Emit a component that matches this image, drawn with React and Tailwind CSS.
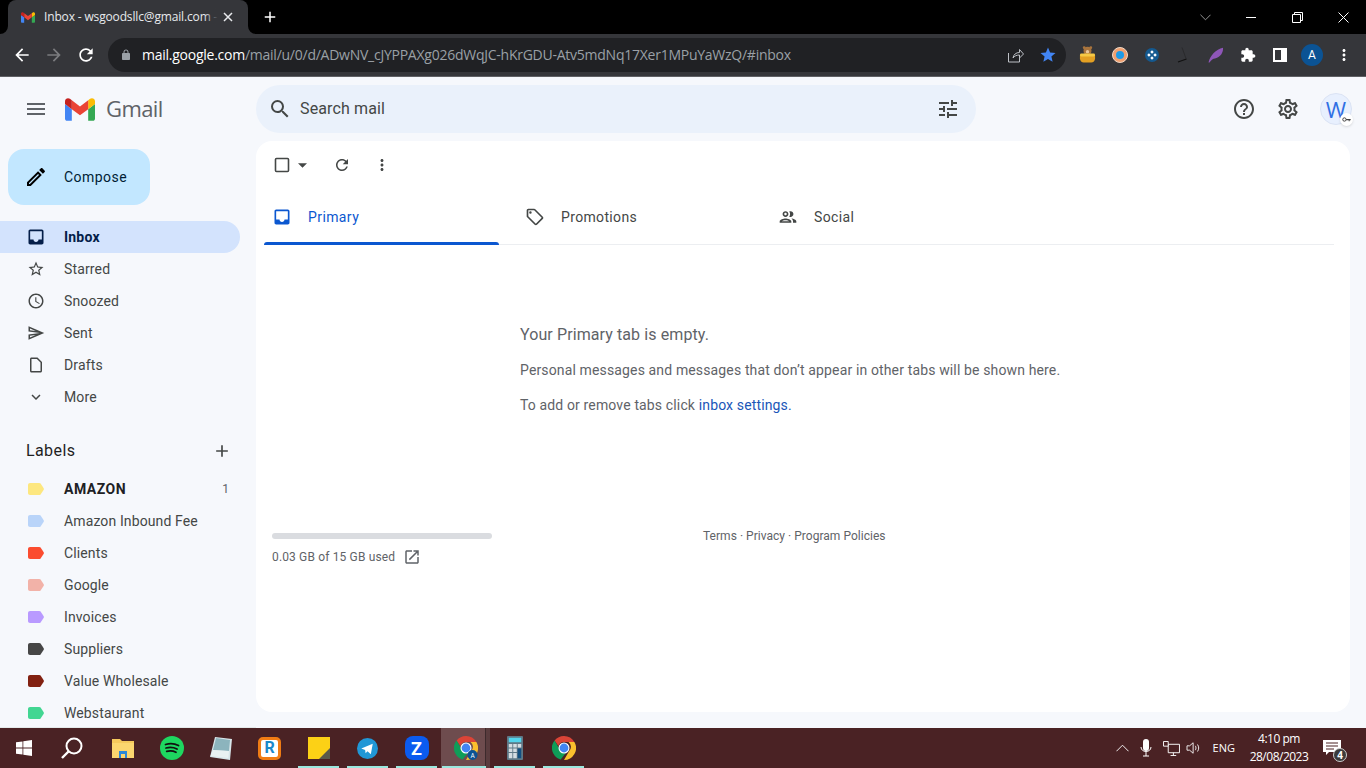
import React from "react";

const P = {
  menu: "M3 18h18v-2H3v2zm0-5h18v-2H3v2zm0-7v2h18V6H3z",
  search: "M15.5 14h-.79l-.28-.27A6.471 6.471 0 0 0 16 9.5 6.5 6.5 0 1 0 9.5 16c1.61 0 3.09-.59 4.23-1.57l.27.28v.79l5 4.99L20.49 19l-4.99-5zm-6 0C7.01 14 5 11.99 5 9.5S7.01 5 9.5 5 14 7.01 14 9.5 11.99 14 9.5 14z",
  tune: "M3 17v2h6v-2H3zM3 5v2h10V5H3zm10 16v-2h8v-2h-8v-2h-2v6h2zM7 9v2H3v2h4v2h2V9H7zm14 4v-2H11v2h10zm-6-4h2V7h4V5h-4V3h-2v6z",
  help: "M11 18h2v-2h-2v2zm1-16C6.48 2 2 6.48 2 12s4.48 10 10 10 10-4.48 10-10S17.52 2 12 2zm0 18c-4.41 0-8-3.59-8-8s3.59-8 8-8 8 3.59 8 8-3.59 8-8 8zm0-14c-2.21 0-4 1.79-4 4h2c0-1.1.9-2 2-2s2 .9 2 2c0 2-3 1.75-3 5h2c0-2.25 3-2.5 3-5 0-2.21-1.79-4-4-4z",
  settings: "M19.43 12.98c.04-.32.07-.64.07-.98 0-.34-.03-.66-.07-.98l2.11-1.65c.19-.15.24-.42.12-.64l-2-3.46c-.09-.16-.26-.25-.44-.25-.06 0-.12.01-.17.03l-2.49 1c-.52-.4-1.08-.73-1.69-.98l-.38-2.65C14.46 2.18 14.25 2 14 2h-4c-.25 0-.46.18-.49.42l-.38 2.65c-.61.25-1.17.59-1.69.98l-2.49-1c-.06-.02-.12-.03-.18-.03-.17 0-.34.09-.43.25l-2 3.46c-.13.22-.07.49.12.64l2.11 1.65c-.04.32-.07.65-.07.98 0 .33.03.66.07.98l-2.11 1.65c-.19.15-.24.42-.12.64l2 3.46c.09.16.26.25.44.25.06 0 .12-.01.17-.03l2.49-1c.52.4 1.08.73 1.69.98l.38 2.65c.03.24.24.42.49.42h4c.25 0 .46-.18.49-.42l.38-2.65c.61-.25 1.17-.59 1.69-.98l2.49 1c.06.02.12.03.18.03.17 0 .34-.09.43-.25l2-3.46c.12-.22.07-.49-.12-.64l-2.11-1.65zm-1.98-1.71c.04.31.05.52.05.73 0 .21-.02.43-.05.73l-.14 1.13.89.7 1.08.84-.7 1.21-1.27-.51-1.04-.42-.9.68c-.43.32-.84.56-1.25.73l-1.06.43-.16 1.13-.2 1.35h-1.4l-.19-1.35-.16-1.13-1.06-.43c-.43-.18-.83-.41-1.23-.71l-.91-.7-1.06.43-1.27.51-.7-1.21 1.08-.84.89-.7-.14-1.13c-.03-.31-.05-.54-.05-.74s.02-.43.05-.73l.14-1.13-.89-.7-1.08-.84.7-1.21 1.27.51 1.04.42.9-.68c.43-.32.84-.56 1.25-.73l1.06-.43.16-1.13.2-1.35h1.39l.19 1.35.16 1.13 1.06.43c.43.18.83.41 1.23.71l.91.7 1.06-.43 1.27-.51.7 1.21-1.07.85-.89.7.14 1.13zM12 8c-2.21 0-4 1.79-4 4s1.79 4 4 4 4-1.79 4-4-1.79-4-4-4zm0 6c-1.1 0-2-.9-2-2s.9-2 2-2 2 .9 2 2-.9 2-2 2z",
  edit: "M14.06 9.02l.92.92L5.92 19H5v-.92l9.06-9.06M17.66 3c-.25 0-.51.1-.7.29l-1.83 1.83 3.75 3.75 1.83-1.83c.39-.39.39-1.02 0-1.41l-2.34-2.34c-.2-.2-.45-.29-.71-.29zm-3.6 3.19L3 17.25V21h3.75L17.81 9.94l-3.75-3.75z",
  inbox: "M19 3H4.99c-1.11 0-1.98.89-1.98 2L3 19c0 1.1.88 2 1.99 2H19c1.1 0 2-.9 2-2V5c0-1.11-.9-2-2-2zm0 12h-4c0 1.66-1.35 3-3 3s-3-1.34-3-3H4.99V5H19v10z",
  star: "M22 9.24l-7.19-.62L12 2 9.19 8.63 2 9.24l5.46 4.73L5.82 21 12 17.27 18.18 21l-1.63-7.03L22 9.24zM12 15.4l-3.76 2.27 1-4.28-3.32-2.88 4.38-.38L12 6.1l1.71 4.04 4.38.38-3.32 2.88 1 4.28L12 15.4z",
  clock: "M11.99 2C6.47 2 2 6.48 2 12s4.47 10 9.99 10C17.52 22 22 17.52 22 12S17.52 2 11.99 2zM12 20c-4.42 0-8-3.58-8-8s3.58-8 8-8 8 3.58 8 8-3.58 8-8 8zm.5-13H11v6l5.25 3.15.75-1.23-4.5-2.67V7z",
  send: "M4.01 6.03l7.51 3.22-7.52-1 .01-2.22m7.5 8.72L4 17.97v-2.22l7.51-1M2.01 3L2 10l15 2-15 2 .01 7L23 12 2.01 3z",
  draft: "M14 2H6c-1.1 0-2 .9-2 2v16c0 1.1.9 2 2 2h12c1.1 0 2-.9 2-2V8l-6-6zM6 20V4h7.17L18 8.83V20H6z",
  more: "M16.59 8.59L12 13.17 7.41 8.59 6 10l6 6 6-6z",
  add: "M19 13h-6v6h-2v-6H5v-2h6V5h2v6h6v2z",
  refresh: "M17.65 6.35C16.2 4.9 14.21 4 12 4c-4.42 0-7.99 3.58-7.99 8s3.57 8 7.99 8c3.73 0 6.84-2.55 7.73-6h-2.08c-.82 2.33-3.04 4-5.65 4-3.31 0-6-2.69-6-6s2.69-6 6-6c1.66 0 3.14.69 4.22 1.78L13 11h7V4l-2.35 2.35z",
  vert: "M12 8c1.1 0 2-.9 2-2s-.9-2-2-2-2 .9-2 2 .9 2 2 2zm0 2c-1.1 0-2 .9-2 2s.9 2 2 2 2-.9 2-2-.9-2-2-2zm0 6c-1.1 0-2 .9-2 2s.9 2 2 2 2-.9 2-2-.9-2-2-2z",
  tag: "M21.41 11.58l-9-9C12.05 2.22 11.55 2 11 2H4c-1.1 0-2 .9-2 2v7c0 .55.22 1.05.59 1.42l9 9c.36.36.86.58 1.41.58.55 0 1.05-.22 1.41-.59l7-7c.37-.36.59-.86.59-1.41 0-.55-.23-1.06-.59-1.42zM13 20.01L4 11V4h7v-.01l9 9-7 7.02zM6.5 5A1.5 1.5 0 1 0 6.5 8 1.5 1.5 0 1 0 6.5 5z",
  people: "M9 13.75c-2.34 0-7 1.17-7 3.5V19h14v-1.75c0-2.33-4.66-3.5-7-3.5zM4.34 17c.84-.58 2.87-1.25 4.66-1.25s3.82.67 4.66 1.25H4.34zM9 12c1.93 0 3.5-1.57 3.5-3.5S10.93 5 9 5 5.5 6.57 5.5 8.5 7.07 12 9 12zm0-5c.83 0 1.5.67 1.5 1.5S9.83 10 9 10s-1.5-.67-1.5-1.5S8.17 7 9 7zm7.04 6.81c1.16.84 1.96 1.96 1.96 3.44V19h4v-1.75c0-2.02-3.5-3.17-5.96-3.44zM15 12c1.93 0 3.5-1.57 3.5-3.5S16.93 5 15 5c-.54 0-1.04.13-1.5.35.63.89 1 1.98 1 3.15s-.37 2.26-1 3.15c.46.22.96.35 1.5.35z",
  open: "M19 19H5V5h7V3H5c-1.11 0-2 .9-2 2v14c0 1.1.89 2 2 2h14c1.1 0 2-.9 2-2v-7h-2v7zM14 3v2h3.59l-9.83 9.83 1.41 1.41L19 6.41V10h2V3h-7z",
  puzzle: "M20.5 11H19V7c0-1.1-.9-2-2-2h-4V3.5C13 2.12 11.88 1 10.5 1S8 2.12 8 3.5V5H4c-1.1 0-1.99.9-1.99 2v3.8H3.5c1.49 0 2.7 1.21 2.7 2.7s-1.21 2.7-2.7 2.7H2V20c0 1.1.9 2 2 2h3.8v-1.5c0-1.49 1.21-2.7 2.7-2.7 1.49 0 2.7 1.21 2.7 2.7V22H17c1.1 0 2-.9 2-2v-4h1.5c1.38 0 2.5-1.12 2.5-2.5S21.88 11 20.5 11z",
  back: "M20 11H7.83l5.59-5.59L12 4l-8 8 8 8 1.41-1.41L7.83 13H20v-2z",
  fwd: "M12 4l-1.41 1.41L16.17 11H4v2h12.17l-5.58 5.59L12 20l8-8z",
  lock: "M18 8h-1V6c0-2.76-2.24-5-5-5S7 3.24 7 6v2H6c-1.1 0-2 .9-2 2v10c0 1.1.9 2 2 2h12c1.1 0 2-.9 2-2V10c0-1.1-.9-2-2-2zM9 6c0-1.66 1.34-3 3-3s3 1.34 3 3v2H9V6z",
  starfill: "M12 17.27L18.18 21l-1.64-7.03L22 9.24l-7.19-.61L12 2 9.19 8.63 2 9.24l5.46 4.73L5.82 21z",
};

function Ic({ d, className }) {
  return (
    <svg viewBox="0 0 24 24" className={className} fill="currentColor">
      <path d={d} />
    </svg>
  );
}

function GmailM({ className }) {
  return (
    <svg viewBox="52 42 88 66" className={className}>
      <path fill="#4285f4" d="M58 108h14V74L52 59v43c0 3.32 2.69 6 6 6" />
      <path fill="#34a853" d="M120 108h14c3.32 0 6-2.69 6-6V59l-20 15" />
      <path fill="#fbbc04" d="M120 48v26l20-15v-8c0-7.42-8.47-11.65-14.4-7.2" />
      <path fill="#ea4335" d="M72 74V48l24 18 24-18v26L96 92" />
      <path fill="#c5221f" d="M52 51v8l20 15V48l-5.6-4.2c-5.94-4.45-14.4-.22-14.4 7.2" />
    </svg>
  );
}

function Chrome({ className, badge }) {
  return (
    <svg viewBox="0 0 48 48" className={className}>
      <path fill="#db4437" d="M24 0a24 24 0 0 1 20.8 12H24a12 12 0 0 0-11.3 8L5.2 9A24 24 0 0 1 24 0z" />
      <path fill="#0f9d58" d="M24 48A24 24 0 0 1 5.2 9l10.4 18a10 10 0 0 0 12.5 6.3L17.4 47A24 24 0 0 0 24 48z" />
      <path fill="#fbc02d" d="M44.8 12A24 24 0 0 1 24 48l10.4-18A12 12 0 0 0 33 12z" />
      <circle cx="24" cy="24" r="11" fill="#fff" />
      <circle cx="24" cy="24" r="8.8" fill="#4285f4" />
      {badge && <circle cx="37" cy="38" r="10" fill="#0b5394" />}
      {badge && <text x="37" y="43" textAnchor="middle" fontSize="13" fill="#fff" fontFamily="Roboto">A</text>}
    </svg>
  );
}

function Tag({ color }) {
  return (
    <svg viewBox="0 0 16 12" className="w-[16px] h-[12px] shrink-0" style={{ color }} fill="currentColor">
      <path d="M2 0h9.3c.5 0 1 .2 1.3.6L15.7 5.2c.3.5.3 1.1 0 1.6l-3.1 4.6c-.3.4-.8.6-1.3.6H2c-1.1 0-2-.9-2-2V2C0 .9.9 0 2 0z" />
    </svg>
  );
}

const navItems = [
  ["Starred", P.star],
  ["Snoozed", P.clock],
  ["Sent", P.send],
  ["Drafts", P.draft],
  ["More", P.more],
];

const labels = [
  ["AMAZON", "#fde77f", true],
  ["Amazon Inbound Fee", "#b9d4f9"],
  ["Clients", "#fb4c2f"],
  ["Google", "#f2b2a8"],
  ["Invoices", "#b99aff"],
  ["Suppliers", "#464646"],
  ["Value Wholesale", "#822111"],
  ["Webstaurant", "#42d692"],
];

function TaskItem({ children, line, active }) {
  return (
    <div className={`w-[49px] h-full shrink-0 flex flex-col ${active ? "bg-[linear-gradient(90deg,#6e4c4e_0_90%,#3d2a2c_90%_92%,#5a3c3e_92%)]" : ""}`}>
      <div className="flex-1 flex items-center justify-center">{children}</div>
      <div className={`h-[2px] -mt-[2px] ${active ? "ml-[1px] mr-[4px]" : "mx-[4px]"} ${line ? "bg-[#9ae8de]" : ""}`} />
    </div>
  );
}

export default function App() {
  return (
    <div className="w-[1366px] h-[768px] overflow-hidden flex flex-col font-['Roboto',sans-serif] bg-[#f6f8fc]">
      {/* Tab strip */}
      <div className="h-[34px] shrink-0 bg-black flex items-end pl-[8px] text-[#dee1e6]">
        <div className="relative w-[240px] h-[34px] bg-[#35363a] rounded-t-[8px] flex items-center pl-[13px] pr-[9px]">
          <svg viewBox="0 0 8 8" className="absolute -left-[8px] bottom-0 w-[8px] h-[8px]"><path d="M8 0v8H0a8 8 0 0 0 8-8z" fill="#35363a" /></svg>
          <svg viewBox="0 0 8 8" className="absolute -right-[8px] bottom-0 w-[8px] h-[8px]"><path d="M0 0v8h8a8 8 0 0 1-8-8z" fill="#35363a" /></svg>
          <GmailM className="w-[14px] h-[11px] shrink-0" />
          <div className="relative ml-[9px] w-[174px] whitespace-nowrap text-[12px] font-['Open_Sans',sans-serif] tracking-[-0.15px] text-[#e8eaed]">
            Inbox - wsgoodsllc@gmail.com -
            <div className="absolute right-0 top-0 h-full w-[14px] bg-gradient-to-r from-transparent to-[#35363a]" />
          </div>
          <svg viewBox="0 0 10 10" className="w-[10px] h-[10px] ml-[5px] shrink-0" stroke="#e8eaed" strokeWidth="1.5"><path d="M1 1l8 8M9 1l-8 8" /></svg>
        </div>
        <div className="h-[34px] flex items-center pl-[13px]">
          <Ic d={P.add} className="w-[18px] h-[18px] text-white" />
        </div>
        <div className="flex-1" />
        <div className="w-[46px] h-[34px] flex items-center justify-center">
          <svg viewBox="0 0 12 7" className="w-[11px] h-[7px]" fill="none" stroke="#a0a0a0"><path d="M.5.5L6 6 11.5.5" /></svg>
        </div>
        <div className="w-[46px] h-[34px] flex items-center justify-center">
          <div className="w-[10px] h-px bg-white" />
        </div>
        <div className="w-[46px] h-[34px] flex items-center justify-center">
          <svg viewBox="0 0 11 11" className="w-[11px] h-[11px]" fill="none" stroke="#fff"><path d="M.5 2.5h8v8h-8zM2.5 2.5v-2h8v8h-2" /></svg>
        </div>
        <div className="w-[46px] h-[34px] flex items-center justify-center">
          <svg viewBox="0 0 11 11" className="w-[11px] h-[11px]" fill="none" stroke="#fff"><path d="M.5.5l10 10M10.5.5l-10 10" /></svg>
        </div>
      </div>

      {/* Toolbar */}
      <div className="h-[43px] shrink-0 bg-[#35363a] border-b border-[#5f6064] flex items-center pl-[12px] pb-[1px]">
        <Ic d={P.back} className="w-[20px] h-[20px] text-white" />
        <Ic d={P.fwd} className="w-[20px] h-[20px] ml-[12px] text-[#7b7c7f]" />
        <Ic d={P.refresh} className="w-[20px] h-[20px] ml-[12px] text-white" />
        <div className="ml-[12px] w-[958px] h-[34px] rounded-full bg-[#202124] flex items-center pl-[12px] pr-[8px]">
          <Ic d={P.lock} className="w-[12px] h-[12px] text-[#9aa0a6]" />
          <div className="ml-[10px] text-[14px] whitespace-nowrap font-['Open_Sans',sans-serif] tracking-[-0.25px]">
            <span className="text-white">mail.google.com</span>
            <span className="text-[#9aa0a6]">/mail/u/0/d/ADwNV_cJYPPAXg026dWqJC-hKrGDU-Atv5mdNq17Xer1MPuYaWzQ/#inbox</span>
          </div>
          <div className="flex-1" />
          <svg viewBox="0 0 16 16" className="w-[16px] h-[16px]" fill="none" stroke="#bdc1c6" strokeWidth="1"><path d="M.5 6v9h11v-4M5 11c.5-3.5 3-5.5 6.5-5.5V2.5L15.5 7l-4 4V8C8.500 8 6.500 9 5 11z" /></svg>
          <Ic d={P.starfill} className="w-[18px] h-[18px] ml-[15px] text-[#4285f4]" />
          <div className="w-[1px]" />
        </div>
        {/* extensions */}
        <div className="ml-[6px] w-[32px] flex items-center justify-center">
          <svg viewBox="0 0 18 18" className="w-[17px] h-[17px] mr-[2px]">
            <circle cx="9" cy="5" r="4.200" fill="#a9743d" />
            <circle cx="5.500" cy="1.800" r="1.500" fill="#a9743d" />
            <circle cx="12.500" cy="1.800" r="1.500" fill="#a9743d" />
            <circle cx="9" cy="6" r="1.800" fill="#e7c79b" />
            <path d="M1 9.500h16v3.500c0 3-2 4.500-4 4.500H5c-2 0-4-1.500-4-4.500z" fill="#e3a023" />
            <rect x="1" y="8" width="16" height="3" rx="1.500" fill="#f6c945" />
          </svg>
        </div>
        <div className="w-[32px] flex items-center justify-center">
          <div className="w-[16px] h-[16px] rounded-full bg-[#f0a070] border border-[#efd9c8] flex items-center justify-center">
            <div className="w-[8px] h-[8px] rounded-full bg-[#1e9be8]" />
          </div>
        </div>
        <div className="w-[32px] flex items-center justify-center">
          <svg viewBox="0 0 16 16" className="w-[14px] h-[14px]">
            <circle cx="8" cy="8" r="8" fill="#14598f" />
            <path d="M8 2.500l2 2-2 2-2-2zM8 9.500l2 2-2 2-2-2zM4.500 6l2 2-2 2-2-2zM11.500 6l2 2-2 2-2-2z" fill="#fff" />
          </svg>
        </div>
        <div className="w-[32px] flex items-center justify-center">
          <svg viewBox="0 0 16 16" className="w-[16px] h-[16px]" fill="none" stroke="#111"><path d="M6 .5l4 11" stroke="#2a2a2c" /><path d="M2 15l8.500-3" strokeWidth="1.200" /></svg>
        </div>
        <div className="w-[32px] flex items-center justify-center">
          <svg viewBox="0 0 16 16" className="w-[16px] h-[16px]"><path d="M.5 15.500C2 9 8 2 15 .8c.5 4-2 9.500-8 10.700-2 .4-3.500 1-5.500 4z" fill="#8e56b8" /></svg>
        </div>
        <div className="w-[32px] flex items-center justify-center">
          <Ic d={P.puzzle} className="w-[16px] h-[16px] text-white" />
        </div>
        <div className="w-[32px] flex items-center justify-center">
          <div className="w-[14px] h-[14px] border-2 border-r-[6px] border-white" />
        </div>
        <div className="w-[32px] flex items-center justify-center">
          <div className="w-[22px] h-[22px] rounded-full bg-[#0b5394] text-white text-[12px] flex items-center justify-center">A</div>
        </div>
        <div className="w-[32px] flex items-center justify-center">
          <Ic d={P.vert} className="w-[18px] h-[18px] text-white" />
        </div>
      </div>

      {/* Gmail body */}
      <div className="flex-1 min-h-0 flex overflow-hidden">
        {/* Sidebar */}
        <div className="w-[256px] shrink-0 overflow-hidden border-b border-[#e4eaea]">
          <div className="h-[64px] flex items-center pl-[24px]">
            <Ic d={P.menu} className="w-[24px] h-[24px] text-[#5f6368]" />
            <GmailM className="ml-[17px] w-[30px] h-[23px]" />
            <span className="ml-[11px] -mt-[2px] text-[22px] text-[#5f6368] font-['Open_Sans',sans-serif] tracking-[-0.6px]">Gmail</span>
          </div>
          <div className="ml-[8px] mt-[8px] w-[142px] h-[56px] rounded-[16px] bg-[#c2e7ff] flex items-center pl-[16px] text-[#001d35]">
            <Ic d={P.edit} className="w-[24px] h-[24px] text-black" />
            <span className="ml-[16px] text-[14px] tracking-[0.45px]">Compose</span>
          </div>
          <div className="mt-[16px] w-[240px] h-[32px] rounded-r-full bg-[#d3e3fd] flex items-center pl-[26px] text-[#041e49]">
            <Ic d={P.inbox} className="w-[20px] h-[20px]" />
            <span className="ml-[18px] text-[14px] font-bold tracking-[0.2px]">Inbox</span>
          </div>
          {navItems.map(([t, d]) => (
            <div key={t} className="w-[240px] h-[32px] flex items-center pl-[27px] text-[#444746]">
              <Ic d={d} className="w-[18px] h-[18px]" />
              <span className="ml-[19px] text-[14px] tracking-[0.15px]">{t}</span>
            </div>
          ))}
          <div className="mt-[22px] w-[240px] h-[32px] flex items-center pl-[26px] pr-[8px] text-[#1f1f1f]">
            <span className="text-[16px] tracking-[0.4px]">Labels</span>
            <div className="flex-1" />
            <Ic d={P.add} className="w-[20px] h-[20px] text-[#444746]" />
          </div>
          <div className="mt-[6px]">
            {labels.map(([t, c, bold]) => (
              <div key={t} className={`w-[240px] h-[32px] flex items-center pl-[28px] pr-[11px] ${bold ? "text-[#202124]" : "text-[#444746]"}`}>
                <Tag color={c} />
                <span className={`ml-[20px] text-[14px] ${bold ? "font-bold tracking-[0.5px]" : "tracking-[0.12px]"}`}>{t}</span>
                <div className="flex-1" />
                {bold && <span className="text-[12px] text-[#5f6368]">1</span>}
              </div>
            ))}
          </div>
        </div>

        {/* Right column */}
        <div className="flex-1 min-w-0 flex flex-col">
          <div className="h-[64px] shrink-0 flex items-center">
            <div className="w-[720px] h-[48px] rounded-full bg-[#eaf1fb] flex items-center pl-[12px] pr-[16px]">
              <Ic d={P.search} className="w-[24px] h-[24px] text-[#444746]" />
              <span className="ml-[8px] text-[16px] text-[#444746] tracking-[0.13px]">Search mail</span>
              <div className="flex-1" />
              <Ic d={P.tune} className="w-[24px] h-[24px] text-[#444746]" />
            </div>
            <div className="flex-1" />
            <Ic d={P.help} className="w-[24px] h-[24px] text-[#444746]" />
            <Ic d={P.settings} className="ml-[20px] w-[24px] h-[24px] text-[#444746]" />
            <div className="relative ml-[20px] mr-[14px] w-[32px] h-[32px] rounded-full bg-[#e8f0fe] border border-[#dbe3f4] flex items-center justify-center text-[22px] text-[#2f6fe4] font-['Open_Sans',sans-serif]">
              W
              <div className="absolute -right-[2px] -bottom-[2px] w-[13px] h-[13px] rounded-full bg-white shadow flex items-center justify-center">
                <svg viewBox="0 0 10 6" className="w-[9px] h-[5px]"><circle cx="2.500" cy="3" r="2" fill="none" stroke="#444" strokeWidth="1.200" /><path d="M4.500 2.500H10V4H8.800v1H7.600V4H4.500z" fill="#444" /></svg>
              </div>
            </div>
          </div>

          <div className="mr-[16px] h-[571px] shrink-0 bg-white rounded-[16px] flex flex-col overflow-hidden">
            <div className="h-[48px] shrink-0 flex items-center pl-[16px] text-[#444746]">
              <svg viewBox="0 0 20 20" className="w-[20px] h-[20px]"><rect x="3.500" y="3.500" width="13" height="13" rx="1" fill="none" stroke="#444746" strokeWidth="1.600" /></svg>
              <svg viewBox="0 0 10 5" className="ml-[6px] w-[9px] h-[5px]" fill="#444746"><path d="M0 0h10L5 5z" /></svg>
              <Ic d={P.refresh} className="ml-[26px] w-[18px] h-[18px]" />
              <Ic d={P.vert} className="ml-[22px] w-[18px] h-[18px]" />
            </div>
            <div className="mx-[8px] w-[1070px] h-[56px] shrink-0 flex border-b border-[#eceef1]">
              <div className="relative w-[253px] flex items-center pl-[8px] text-[#0b57d0]">
                <Ic d={P.inbox} className="w-[20px] h-[20px]" />
                <span className="ml-[16px] mt-[1px] text-[14px] tracking-[0.4px]">Primary</span>
                <div className="absolute left-0 bottom-[-1px] w-[235px] h-[3px] rounded-t-[3px] bg-[#0b57d0]" />
              </div>
              <div className="w-[253px] flex items-center pl-[8px] text-[#444746]">
                <Ic d={P.tag} className="w-[20px] h-[20px]" />
                <span className="ml-[16px] mt-[1px] text-[14px] tracking-[0.35px]">Promotions</span>
              </div>
              <div className="w-[253px] flex items-center pl-[8px] text-[#444746]">
                <Ic d={P.people} className="w-[20px] h-[20px]" />
                <span className="ml-[16px] mt-[1px] text-[14px] tracking-[0.35px]">Social</span>
              </div>
            </div>
            <div className="ml-[264px] pt-[80px] h-[288px] shrink-0 text-[#5f6368]">
              <div className="text-[16px] leading-[20px] tracking-[0.1px]">Your Primary tab is empty.</div>
              <div className="mt-[15px] text-[14px] leading-[20px] tracking-[0.14px]">Personal messages and messages that don’t appear in other tabs will be shown here.</div>
              <div className="mt-[15px] text-[14px] leading-[20px] tracking-[0.14px]">To add or remove tabs click <span className="text-[#1a56b8]">inbox settings.</span></div>
            </div>
            <div className="flex text-[12px] text-[#5f6368]">
              <div className="ml-[16px] w-[220px]">
                <div className="h-[6px] rounded-full bg-[#dadce0]" />
                <div className="mt-[9px] flex items-center">
                  <span className="tracking-[0.15px]">0.03 GB of 15 GB used</span>
                  <Ic d={P.open} className="ml-[8px] w-[18px] h-[18px] text-[#5f6368]" />
                </div>
              </div>
              <div className="ml-[211px] -mt-[6px] tracking-[0.03px]">Terms · Privacy · Program Policies</div>
            </div>
          </div>
        </div>
      </div>

      {/* Taskbar */}
      <div className="h-[40px] shrink-0 bg-[#4a2224] flex items-stretch text-white font-['Open_Sans',sans-serif]">
        <TaskItem>
          <svg viewBox="0 0 16 16" className="w-[16px] h-[16px] mr-[1px]" fill="#fff"><path d="M0 2.300l6.500-.9v6.200H0zM7.300 1.300L16 0v7.600H7.300zM0 8.400h6.500v6.200L0 13.700zM7.300 8.400H16V16l-8.700-1.300z" /></svg>
        </TaskItem>
        <TaskItem>
          <svg viewBox="0 0 24 24" className="w-[24px] h-[24px] mr-[3px]" fill="none" stroke="#fff" strokeWidth="2"><circle cx="14" cy="10" r="7.500" /><path d="M8.500 15.500L2 22" strokeWidth="2.400" /></svg>
        </TaskItem>
        <TaskItem>
          <svg viewBox="0 0 22 20" className="w-[22px] h-[20px]"><path d="M0 1h8l2 2h12v17H0z" fill="#f5c95c" /><path d="M0 5h22v15H0z" fill="#fbd66f" /><path d="M7 13h8v7h-2v-4H9v4H7z" fill="#2b88d8" /></svg>
        </TaskItem>
        <TaskItem>
          <svg viewBox="0 0 24 24" className="w-[24px] h-[24px]"><circle cx="12" cy="12" r="12" fill="#1ed760" /><path d="M5.500 8.500c4.500-1.300 9-1 13 1M6 12c3.800-1 7.500-.8 11 1M6.700 15.300c3.200-.8 6.300-.6 9.300.9" fill="none" stroke="#111" strokeWidth="1.800" strokeLinecap="round" /></svg>
        </TaskItem>
        <TaskItem>
          <svg viewBox="0 0 24 24" className="w-[24px] h-[24px]"><path d="M6 1l17 2-2 21-20-3z" fill="#d8e6ea" /><path d="M7 2l14 2-1 11L4 14z" fill="#8cb4bd" /><path d="M4 14l16 1-.7 7L1.500 20z" fill="#e9f1f2" /></svg>
        </TaskItem>
        <TaskItem>
          <div className="w-[23px] h-[23px] rounded-[5px] bg-white border-[3px] border-[#f07c14] flex items-center justify-center text-[#1b88c9] text-[16px] font-bold font-['Roboto',sans-serif]">R</div>
        </TaskItem>
        <TaskItem line>
          <svg viewBox="0 0 22 22" className="w-[22px] h-[22px]"><path d="M0 0h22v22H0z" fill="#fcd116" /><path d="M11 22l11-11v11z" fill="#5a5a4a" /></svg>
        </TaskItem>
        <TaskItem line>
          <svg viewBox="0 0 22 22" className="w-[21px] h-[21px]"><circle cx="11" cy="11" r="11" fill="#2197d6" /><path d="M4.500 11l12-5-2 11-3.500-3-2 2-.5-3.500z" fill="#fff" /></svg>
        </TaskItem>
        <TaskItem line>
          <div className="w-[24px] h-[24px] rounded-[8px] bg-[#0b5bf0] flex items-center justify-center text-white text-[18px] font-bold font-['Roboto',sans-serif]">Z</div>
        </TaskItem>
        <TaskItem line active>
          <Chrome className="w-[24px] h-[24px]" badge />
        </TaskItem>
        <TaskItem line>
          <svg viewBox="0 0 18 27" className="w-[18px] h-[24px]">
            <rect width="18" height="27" rx="1" fill="#5f7886" />
            <rect x="2" y="2" width="14" height="5" fill="#53d4ec" />
            <path d="M2 9h4v4H2zM7 9h4v4H7zM2 14h4v4H2zM7 14h4v4H7zM2 19h4v6H2zM7 19h4v6H7z" fill="#d5dde2" />
            <path d="M12 9h4v4h-4z" fill="#d5dde2" />
            <path d="M12 14h4v11h-4z" fill="#124f80" />
          </svg>
        </TaskItem>
        <TaskItem line>
          <Chrome className="w-[24px] h-[24px]" />
        </TaskItem>
        <div className="flex-1" />
        <div className="flex items-center">
          <svg viewBox="0 0 14 8" className="w-[13px] h-[8px]" fill="none" stroke="#fff"><path d="M.5 7.500L7 1l6.500 6.500" /></svg>
          <svg viewBox="0 0 12 18" className="ml-[11px] w-[12px] h-[18px]"><rect x="3" y="0" width="6" height="12" rx="3" fill="#fff" /><path d="M1 8c0 6 10 6 10 0M6 13v4M3 17h6" fill="none" stroke="#fff" /></svg>
          <svg viewBox="0 0 18 16" className="ml-[11px] w-[17px] h-[15px]" fill="none" stroke="#fff"><path d="M5.500 3.500h12v9h-12zM11 12.500v3M8 15.500h6" /><path d="M.5.5h5v5h-5z" fill="#4a2224" /></svg>
          <svg viewBox="0 0 18 16" className="ml-[6px] w-[16px] h-[14px]" fill="none" stroke="#fff"><path d="M1 5.500h3L8 2v12l-4-3.500H1zM10.500 5.500c1 1.500 1 3.500 0 5M13 4c1.800 2.500 1.800 5.500 0 8" /></svg>
          <span className="ml-[11px] text-[11px]">ENG</span>
          <div className="ml-[8px] w-[72px] text-center text-[12px] leading-[18px] tracking-[-0.5px]">
            <div>4:10 pm</div>
            <div>28/08/2023</div>
          </div>
          <div className="relative ml-[8px] mr-[25px] w-[18px] h-[16px]">
            <svg viewBox="0 0 18 16" className="w-[18px] h-[16px]"><path d="M0 0h18v12H6l-3 3v-3H0z" fill="#fff" /><path d="M3 3h12M3 6h12M3 9h8" stroke="#4a2224" /></svg>
            <div className="absolute -right-[6px] -bottom-[6px] w-[14px] h-[14px] rounded-full bg-[#3b3b3b] border border-[#cfcfcf] text-[10px] leading-[12px] text-center font-bold tracking-normal">4</div>
          </div>
        </div>
      </div>
    </div>
  );
}
